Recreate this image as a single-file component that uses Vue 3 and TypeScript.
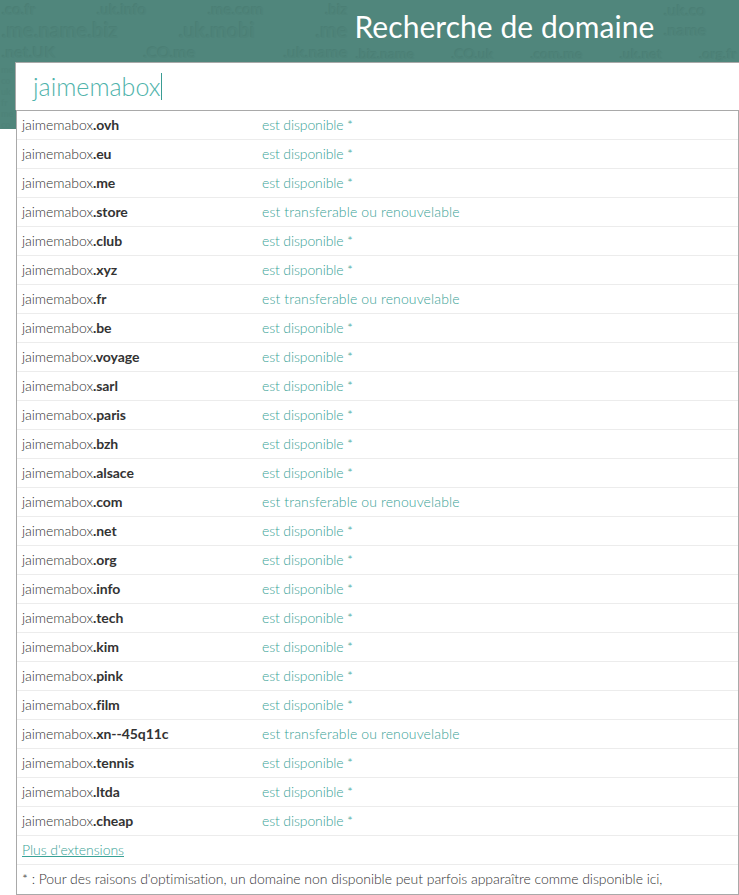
<template>
  <div class="page">
    <header class="hero">
      <div class="pattern" aria-hidden="true">
        <div class="pat-left">
          <div class="pat-row one"><span v-for="w in rowOne" :key="w">{{ w }}</span></div>
          <div class="pat-row two"><span v-for="w in rowTwo" :key="w">{{ w }}</span></div>
          <div class="pat-row three"><span v-for="w in rowThree" :key="w">{{ w }}</span></div>
        </div>
        <div class="pat-right"><span v-for="w in rightWords" :key="w">{{ w }}</span></div>
        <div class="pat-row under"><span v-for="w in underWords" :key="w">{{ w }}</span></div>
        <div class="pat-side"><span v-for="(w, i) in sideWords" :key="i">{{ w }}</span></div>
      </div>
      <h1 class="title">Recherche de domaine</h1>
    </header>
    <div class="search">
      <div class="search-input">
        <span>jaimemabox</span><i class="caret"></i>
      </div>
      <div class="results">
        <div v-for="r in rows" :key="r.tld" class="row">
          <span class="domain">jaimemabox<b>.{{ r.tld }}</b></span>
          <span class="status" :class="{ long: r.transfer }">{{ r.transfer ? 'est transferable ou renouvelable' : 'est disponible *' }}</span>
        </div>
        <div class="row more"><a href="#">Plus d'extensions</a></div>
        <div class="row note">* : Pour des raisons d'optimisation, un domaine non disponible peut parfois apparaître comme disponible ici,</div>
      </div>
    </div>
  </div>
</template>

<script setup lang="ts">
const transfer = ['store', 'fr', 'com', 'xn--45q11c']
const tlds = ['ovh', 'eu', 'me', 'store', 'club', 'xyz', 'fr', 'be', 'voyage', 'sarl', 'paris', 'bzh', 'alsace', 'com', 'net', 'org', 'info', 'tech', 'kim', 'pink', 'film', 'xn--45q11c', 'tennis', 'ltda', 'cheap']
const rows = tlds.map((tld) => ({ tld, transfer: transfer.includes(tld) }))

// decorative letters behind the header
const rowOne = ['.co.fr', '.uk.info', '.me.com', '.biz']
const rowTwo = ['.me.name.biz', '.uk.mobi', '.me']
const rowThree = ['.net.UK', '.CO.me', '.uk.name']
const rightWords = ['.uk.co', '.name']
const underWords = ['.biz.name', '.CO.uk', '.com.me', '.uk.net', '.org.fr']
const sideWords = ['me', 'co', 'uk', 'fr', 'me', 'co']
</script>

<style>
html, body { margin: 0; background: #fff; }
</style>

<style scoped>
.page {
  width: 739px;
  height: 895px;
  overflow: hidden;
  position: relative;
  font-family: Lato, "Open Sans", sans-serif;
  background: #fff;
}
.hero {
  height: 129px;
  margin-bottom: -67px;
  background: #50867c;
  position: relative;
  overflow: hidden;
}
.pattern {
  position: absolute;
  inset: 0;
  color: #4e8379;
  font-weight: 700;
  text-shadow: -1px -1px 0 #4b7f75;
}
.pat-left {
  position: absolute;
  left: 2px;
  top: 0;
  width: 346px;
}
.pat-row {
  display: flex;
  justify-content: space-between;
  white-space: nowrap;
}
.one { font-size: 15px; line-height: 18px; }
.two { font-size: 20px; line-height: 24px; }
.three { font-size: 16px; line-height: 19px; }
.pat-right {
  position: absolute;
  left: 664px;
  top: 0;
  display: flex;
  flex-direction: column;
  font-size: 16px;
  line-height: 20px;
}
.under {
  position: absolute;
  left: 356px;
  right: 2px;
  top: 45px;
  font-size: 14px;
  line-height: 17px;
}
.pat-side {
  position: absolute;
  left: 1px;
  top: 64px;
  display: flex;
  flex-direction: column;
  font-size: 9px;
  line-height: 11px;
  text-shadow: none;
}
.title {
  position: relative;
  margin: 0;
  padding: 13px 0 0 354.5px;
  font-size: 30px;
  letter-spacing: 0.05px;
  line-height: 26px;
  font-weight: 400;
  color: #fff;
}
.search {
  position: relative;
  margin-left: 15px;
}
.search-input {
  box-sizing: content-box;
  height: 45px;
  padding: 0 0 2px 17px;
  display: flex;
  align-items: center;
  background: #fff;
  border-top: 1px solid #a9a9a9;
  border-left: 1px solid #a9a9a9;
  font-size: 25px;
  font-weight: 300;
  color: #4fb3ab;
}
.caret {
  width: 1px;
  height: 27px;
  margin-top: 2px;
  background: #3a9c94;
}
.results {
  box-sizing: border-box;
  margin-left: 1px;
  width: 723px;
  border: 1px solid #a9a9a9;
  background: #fff;
}
.row {
  box-sizing: border-box;
  height: 29px;
  padding: 0 0 2px 5px;
  display: flex;
  align-items: center;
  border-bottom: 1px solid #ececec;
  font-size: 14px;
  font-weight: 300;
  color: #333;
  letter-spacing: -0.05px;
}
.domain { width: 240px; }
.domain b { font-weight: 700; color: #333; }
.status { color: #38a296; letter-spacing: -0.12px; }
.status.long { letter-spacing: 0.125px; }
.more a { color: #38a296; text-decoration: underline; }
.note { border-bottom: 0; }
</style>
